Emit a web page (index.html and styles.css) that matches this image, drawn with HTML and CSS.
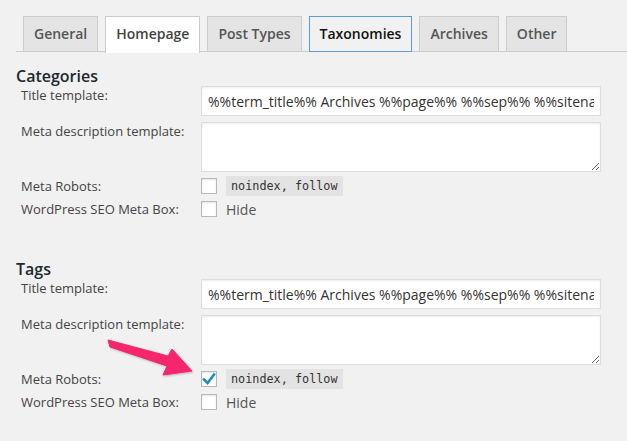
FILE: index.html
```html
<!DOCTYPE html>
<html lang="en">

<head>
  <meta charset="UTF-8" />
  <meta name="viewport" content="width=device-width, initial-scale=1.0" />
  <title>Taxonomies</title>
  <link rel="stylesheet" href="styles.css">
</head>

<body>
  <div class="wrap">
    <!-- Tabs -->
    <nav class="nav-tabs">
      <span class="nav-tab">General</span>
      <span class="nav-tab active">Homepage</span>
      <span class="nav-tab">Post Types</span>
      <span class="nav-tab focus">Taxonomies</span>
      <span class="nav-tab">Archives</span>
      <span class="nav-tab">Other</span>
    </nav>

    <!-- Categories -->
    <div class="tax-section">
      <h3>Categories</h3>
      <div class="row row-input">
        <label>Title template:</label>
        <input type="text" class="text" value="%%term_title%% Archives %%page%% %%sep%% %%sitename%%" />
      </div>
      <div class="row row-area">
        <label>Meta description template:</label>
        <textarea class="area"></textarea>
      </div>
      <div class="row row-check">
        <label>Meta Robots:</label>
        <span class="box"></span>
        <code>noindex, follow</code>
      </div>
      <div class="row row-check">
        <label>WordPress SEO Meta Box:</label>
        <span class="box"></span>
        <span class="hide">Hide</span>
      </div>
    </div>

    <!-- Tags -->
    <div class="tax-section">
      <h3>Tags</h3>
      <div class="row row-input">
        <label>Title template:</label>
        <input type="text" class="text" value="%%term_title%% Archives %%page%% %%sep%% %%sitename%%" />
      </div>
      <div class="row row-area">
        <label>Meta description template:</label>
        <textarea class="area"></textarea>
      </div>
      <div class="row row-check">
        <label>Meta Robots:</label>
        <span class="box checked">
          <svg width="16" height="16" viewBox="0 0 16 16"><path d="M3 8.5 L6.6 12 L13 3.6" fill="none" stroke="#1e8cbe" stroke-width="2.6" stroke-linecap="square" /></svg>
        </span>
        <code>noindex, follow</code>
      </div>
      <div class="row row-check">
        <label>WordPress SEO Meta Box:</label>
        <span class="box"></span>
        <span class="hide">Hide</span>
      </div>
    </div>

    <!-- annotation arrow -->
    <svg class="arrow" width="627" height="441" viewBox="0 0 627 441">
      <polygon points="108,340 168,356 172,349 192,371 163,375 167,366 110,347" fill="#f5256e" stroke="#f5256e" stroke-width="1" stroke-linejoin="round" />
    </svg>
  </div>
</body>

</html>
```

FILE: styles.css
```css
body {
  margin: 0;
  background-color: #f1f1f1;
  font-family: 'Open Sans', sans-serif;
  font-size: 13px;
  color: #444;
}

.wrap {
  position: relative;
  padding: 16px 0 0 16px;
  height: 425px;
}

/* Tabs */
.nav-tabs {
  display: flex;
  gap: 7px;
  padding-left: 7px;
  border-bottom: 1px solid #ccc;
  height: 35px;
}

.nav-tab {
  background: #e4e4e4;
  border: 1px solid #ccc;
  border-bottom: none;
  padding: 5px 10px 6px;
  font-size: 14px;
  font-weight: 600;
  line-height: 23px;
  color: #555;
}

.nav-tab.active {
  background: #fff;
  color: #444;
  height: 24px;
  padding-bottom: 7px;
}

.nav-tab.focus {
  background: #f1f1f1;
  border: 1px solid #5b9dd9;
  color: #111;
  height: 24px;
  padding-bottom: 5px;
}

/* Sections */
.tax-section {
  margin-top: 15px;
}

.tax-section + .tax-section {
  margin-top: 41px;
}

.tax-section h3 {
  margin: 0;
  font-size: 16px;
  font-weight: 600;
  line-height: 19px;
  color: #23282d;
}

.row {
  display: flex;
  padding-left: 5px;
}

.row label {
  width: 180px;
  flex-shrink: 0;
  line-height: 18px;
}

.row-input {
  height: 30px;
}

.row-area {
  margin-top: 6px;
  height: 50px;
}

.row-check {
  align-items: center;
  height: 20px;
  margin-top: 4px;
}

.row-check + .row-check {
  margin-top: 3px;
}

.text,
.area {
  box-sizing: border-box;
  width: 400px;
  margin: 0;
  border: 1px solid #ddd;
  box-shadow: inset 0 1px 2px rgba(0, 0, 0, 0.07);
  background: #fff;
  font-family: 'Open Sans', sans-serif;
  color: #333;
  outline: none;
}

.text {
  height: 30px;
  padding: 0 6px;
  font-size: 14px;
}

.area {
  height: 50px;
  resize: vertical;
}

.box {
  box-sizing: border-box;
  width: 16px;
  height: 16px;
  border: 1px solid #b4b9be;
  background: #fff;
  box-shadow: inset 0 1px 2px rgba(0, 0, 0, 0.1);
  margin-right: 9px;
  position: relative;
}

.box svg {
  position: absolute;
  left: -1px;
  top: -1px;
}

code {
  background: #e3e3e3;
  padding: 0 5px;
  line-height: 20px;
  font-family: 'DejaVu Sans Mono', monospace;
  font-size: 11.8px;
  color: #333;
}

.hide {
  font-size: 14px;
  color: #555;
}

.arrow {
  position: absolute;
  left: 0;
  top: 0;
  pointer-events: none;
  filter: drop-shadow(1px 1px 1px rgba(0, 0, 0, 0.25));
}
```
